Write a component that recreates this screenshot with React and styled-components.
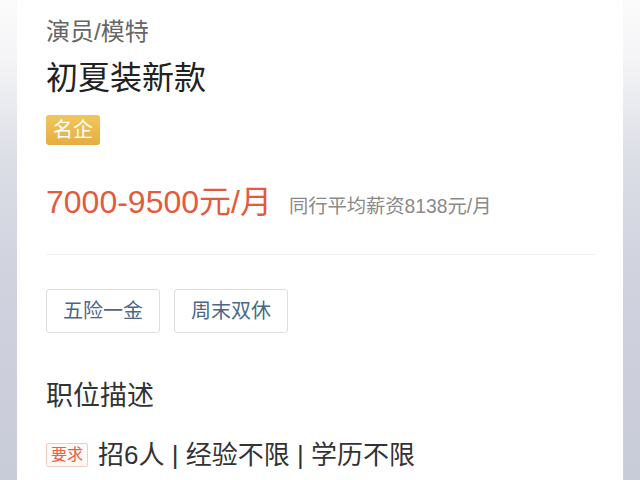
import styled, { createGlobalStyle } from "styled-components";

const GlobalStyle = createGlobalStyle`
  html, body {
    margin: 0;
    padding: 0;
  }
  body {
    font-family: "Liberation Sans", "Noto Sans CJK SC", sans-serif;
    background: linear-gradient(
      to bottom,
      #fbfbfc 0px,
      #f4f4f6 60px,
      #dcdee6 160px,
      #d1d4df 260px,
      #c8cbd8 480px
    );
    min-height: 480px;
  }
`;

const Card = styled.div`
  margin: 0 17px;
  min-height: 480px;
  background: #fff;
  padding: 20px 28px 0 29px;
  box-sizing: border-box;
  display: flex;
  flex-direction: column;
`;

const Category = styled.div`
  font-size: 24px;
  line-height: 24px;
  color: #666;
`;

const Title = styled.h1`
  margin: 18px 0 0;
  font-size: 32px;
  line-height: 32px;
  font-weight: 400;
  color: #222;
`;

const Badge = styled.span`
  margin-top: 21px;
  align-self: flex-start;
  height: 30px;
  padding: 0 7px;
  border-radius: 3px;
  background: linear-gradient(to bottom, #f1c75d, #e4ae40);
  color: #fff;
  font-size: 20px;
  line-height: 30px;
`;

const SalaryRow = styled.div`
  margin-top: 41px;
  display: flex;
  align-items: baseline;
  gap: 17px;
  height: 32px;
`;

const Salary = styled.span`
  font-size: 32px;
  line-height: 32px;
  color: #e35a3d;
`;

const Average = styled.span`
  font-size: 19.3px;
  color: #8a8a8a;
`;

const Divider = styled.div`
  margin-top: 36px;
  height: 1px;
  background: #f2f2f2;
`;

const Tags = styled.div`
  margin-top: 34px;
  display: flex;
  gap: 14px;
`;

const Tag = styled.span`
  height: 44px;
  box-sizing: border-box;
  padding: 0 16px;
  border: 1px solid #dcdde0;
  border-radius: 3px;
  font-size: 20px;
  line-height: 42px;
  color: #4b6788;
`;

const SectionTitle = styled.h2`
  margin: 50px 0 0;
  font-size: 27px;
  line-height: 27px;
  font-weight: 400;
  color: #333;
`;

const ReqRow = styled.div`
  margin-top: 32px;
  display: flex;
  align-items: center;
  gap: 10px;
  height: 26px;
`;

const ReqLabel = styled.span`
  height: 24px;
  box-sizing: border-box;
  padding: 0 4px;
  border: 1px solid #f2cdbf;
  background: #fff8f5;
  border-radius: 2px;
  font-size: 16px;
  line-height: 22px;
  color: #e2633f;
`;

const ReqText = styled.span`
  font-size: 26px;
  line-height: 26px;
  color: #333;
`;

export default function App() {
  return (
    <>
      <GlobalStyle />
      <Card>
        <Category>演员/模特</Category>
        <Title>初夏装新款</Title>
        <Badge>名企</Badge>
        <SalaryRow>
          <Salary>7000-9500元/月</Salary>
          <Average>同行平均薪资8138元/月</Average>
        </SalaryRow>
        <Divider />
        <Tags>
          <Tag>五险一金</Tag>
          <Tag>周末双休</Tag>
        </Tags>
        <SectionTitle>职位描述</SectionTitle>
        <ReqRow>
          <ReqLabel>要求</ReqLabel>
          <ReqText>招6人 | 经验不限 | 学历不限</ReqText>
        </ReqRow>
      </Card>
    </>
  );
}
